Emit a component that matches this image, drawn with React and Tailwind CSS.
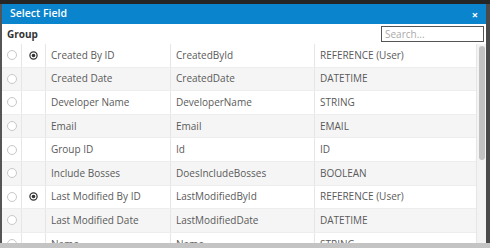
import React from 'react';

const rows = [
  { label: 'Created By ID', api: 'CreatedById', type: 'REFERENCE (User)', ref: true },
  { label: 'Created Date', api: 'CreatedDate', type: 'DATETIME' },
  { label: 'Developer Name', api: 'DeveloperName', type: 'STRING' },
  { label: 'Email', api: 'Email', type: 'EMAIL' },
  { label: 'Group ID', api: 'Id', type: 'ID' },
  { label: 'Include Bosses', api: 'DoesIncludeBosses', type: 'BOOLEAN' },
  { label: 'Last Modified By ID', api: 'LastModifiedById', type: 'REFERENCE (User)', ref: true },
  { label: 'Last Modified Date', api: 'LastModifiedDate', type: 'DATETIME' },
  { label: 'Name', api: 'Name', type: 'STRING' },
];

function RefIcon() {
  return (
    <svg width="9" height="9" viewBox="0 0 10 10">
      <circle cx="5" cy="5" r="4" fill="none" stroke="#333" strokeWidth="1.4" />
      <circle cx="5" cy="5" r="2" fill="#333" />
    </svg>
  );
}

export default function App() {
  return (
    <div className="w-[490px] h-[248px] overflow-hidden flex flex-col bg-[#3b3b3b]" style={{ fontFamily: '"Open Sans", "Liberation Sans", sans-serif' }}>
      <div className="h-[4px] bg-[#262626] shrink-0" />
      <div className="flex h-[239px] shrink-0">
        <div className="w-[2px] bg-[#555]" />
        <div className="w-[484px] flex flex-col bg-white overflow-hidden">
          <div className="h-[20px] bg-[#0a84cc] flex items-center justify-between px-[8px] shrink-0">
            <span className="text-white text-[10.5px] font-semibold">Select Field</span>
            <span className="text-white text-[11px] font-bold leading-none">×</span>
          </div>
          <div className="h-[20px] flex items-center justify-between pl-[5px] pr-[2px] shrink-0">
            <span className="text-[10px] font-bold text-[#333]">Group</span>
            <input
              className="w-[103px] h-[16px] border border-[#555] px-[3px] text-[10px] text-[#333] placeholder:text-[#aaa] outline-none"
              placeholder="Search..."
            />
          </div>
          <div className="flex flex-1 overflow-hidden">
            <div className="flex-1 overflow-hidden">
              {rows.map((r, i) => (
                <div
                  key={r.api}
                  className={`flex h-[23.6px] text-[10px] text-[#5a5a5a] border-b border-[#ededed] ${i % 2 ? 'bg-[#f5f5f5]' : 'bg-white'}`}
                >
                  <div className="w-[20px] flex items-center justify-center border-r border-[#e6e6e6]">
                    <span className="w-[10px] h-[10px] rounded-full border border-[#c8c8c8] bg-white" />
                  </div>
                  <div className="w-[24px] flex items-center justify-center border-r border-[#e6e6e6]">
                    {r.ref && <RefIcon />}
                  </div>
                  <div className="w-[125px] flex items-center pl-[5px] border-r border-[#e6e6e6]">{r.label}</div>
                  <div className="w-[144px] flex items-center pl-[5px] border-r border-[#e6e6e6]">{r.api}</div>
                  <div className="flex-1 flex items-center pl-[5px]">{r.type}</div>
                </div>
              ))}
            </div>
            <div className="w-[10px] bg-[#f3f3f3] border-l border-[#e6e6e6] pt-[2px] flex justify-center">
              <div className="w-[6px] h-[114px] rounded-full bg-[#c2c2c2]" />
            </div>
          </div>
        </div>
        <div className="flex-1 bg-[#4a4a4a]" />
      </div>
      <div className="flex-1 bg-[#c4c4c4]" />
    </div>
  );
}
